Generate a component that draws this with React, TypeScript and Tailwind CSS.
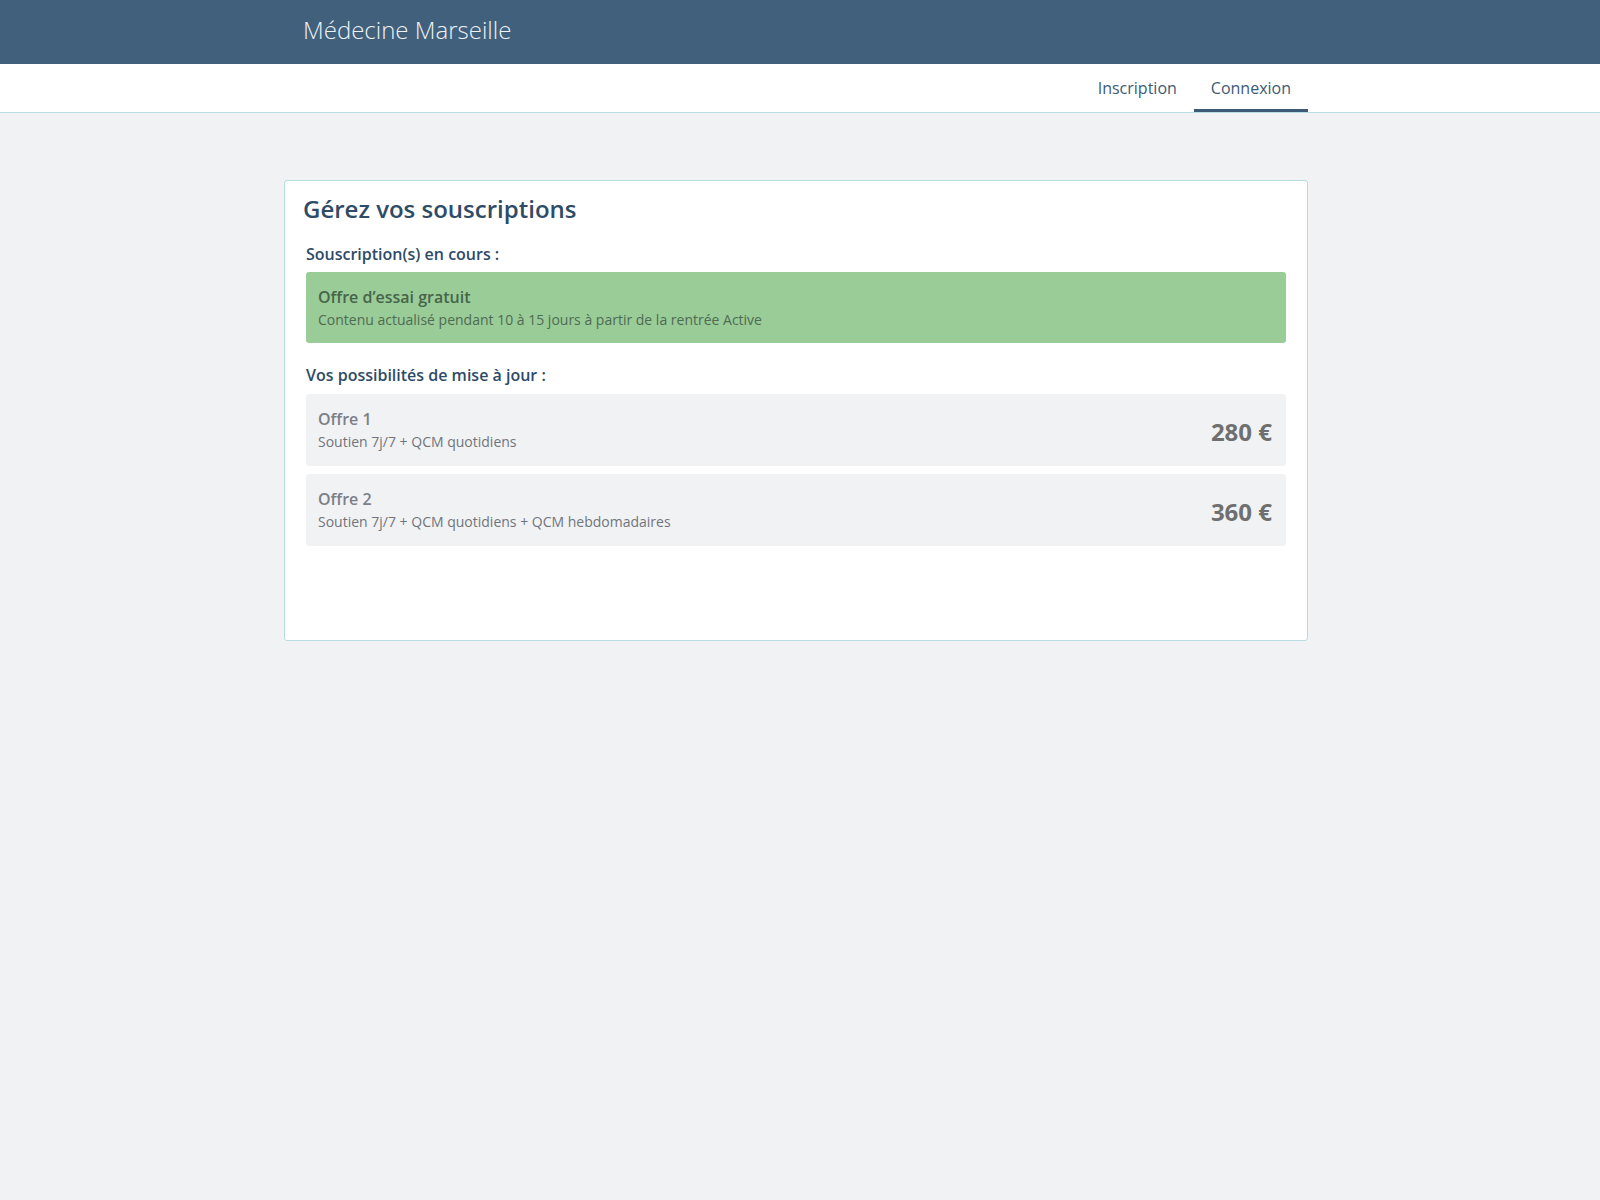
type Offer = {
  name: string;
  detail: string;
  price: string;
};

const offers: Offer[] = [
  { name: 'Offre 1', detail: 'Soutien 7j/7 + QCM quotidiens', price: '280 €' },
  { name: 'Offre 2', detail: 'Soutien 7j/7 + QCM quotidiens + QCM hebdomadaires', price: '360 €' },
];

export default function App() {
  return (
    <div className="min-h-screen bg-[#f1f2f4] font-['Open_Sans',sans-serif]">
      <header className="h-16 bg-[#41607c]">
        <div className="w-[1024px] ml-[284px] h-full flex items-center pl-[19px] pb-[5px]">
          <span className="text-[24px] font-light text-[#eef2f6] leading-none">Médecine Marseille</span>
        </div>
      </header>

      <nav className="h-[49px] bg-white border-b border-[#b5dde3]">
        <div className="w-[1024px] ml-[284px] h-12 flex justify-end">
          <a className="px-[17px] flex items-center text-base text-[#3e5a75] border-b-[3px] border-transparent pt-[3px]">
            Inscription
          </a>
          <a className="px-[17px] flex items-center text-base text-[#3e5a75] border-b-[3px] border-[#3d5a76] pt-[3px]">
            Connexion
          </a>
        </div>
      </nav>

      <main className="pt-[67px]">
        <section className="w-[1024px] ml-[284px] bg-white border border-[#b6dde2] rounded-[3px] px-[21px] pt-[12px] pb-[94px]">
          <h1 className="text-[24px] leading-8 font-semibold text-[#2e4b67] -ml-[3px]">Gérez vos souscriptions</h1>

          <h2 className="mt-[17px] mb-[6px] text-base leading-6 font-semibold text-[#2e4b67]">Souscription(s) en cours :</h2>
          <div className="bg-[#9acc98] rounded-[3px] px-3 pt-[13px] pb-[13px]">
            <div className="text-base leading-6 font-semibold text-[#46654a]">Offre d’essai gratuit</div>
            <div className="pt-[1px] text-sm leading-5 text-[#4f6b52]">Contenu actualisé pendant 10 à 15 jours à partir de la rentrée Active</div>
          </div>

          <h2 className="mt-[20px] mb-[7px] text-base leading-6 font-semibold text-[#2e4b67]">Vos possibilités de mise à jour :</h2>
          <div className="flex flex-col gap-2">
            {offers.map((o) => (
              <div key={o.name} className="bg-[#f1f2f4] rounded-[3px] pl-3 pr-[14px] pt-[13px] pb-[14px] flex items-center justify-between">
                <div>
                  <div className="text-base leading-6 font-semibold text-[#7b8089]">{o.name}</div>
                  <div className="pt-[1px] text-sm leading-5 text-[#70757d]">{o.detail}</div>
                </div>
                <div className="text-[24px] font-bold text-[#6f6f6f] leading-none pt-[4px]">{o.price}</div>
              </div>
            ))}
          </div>
        </section>
      </main>
    </div>
  );
}
